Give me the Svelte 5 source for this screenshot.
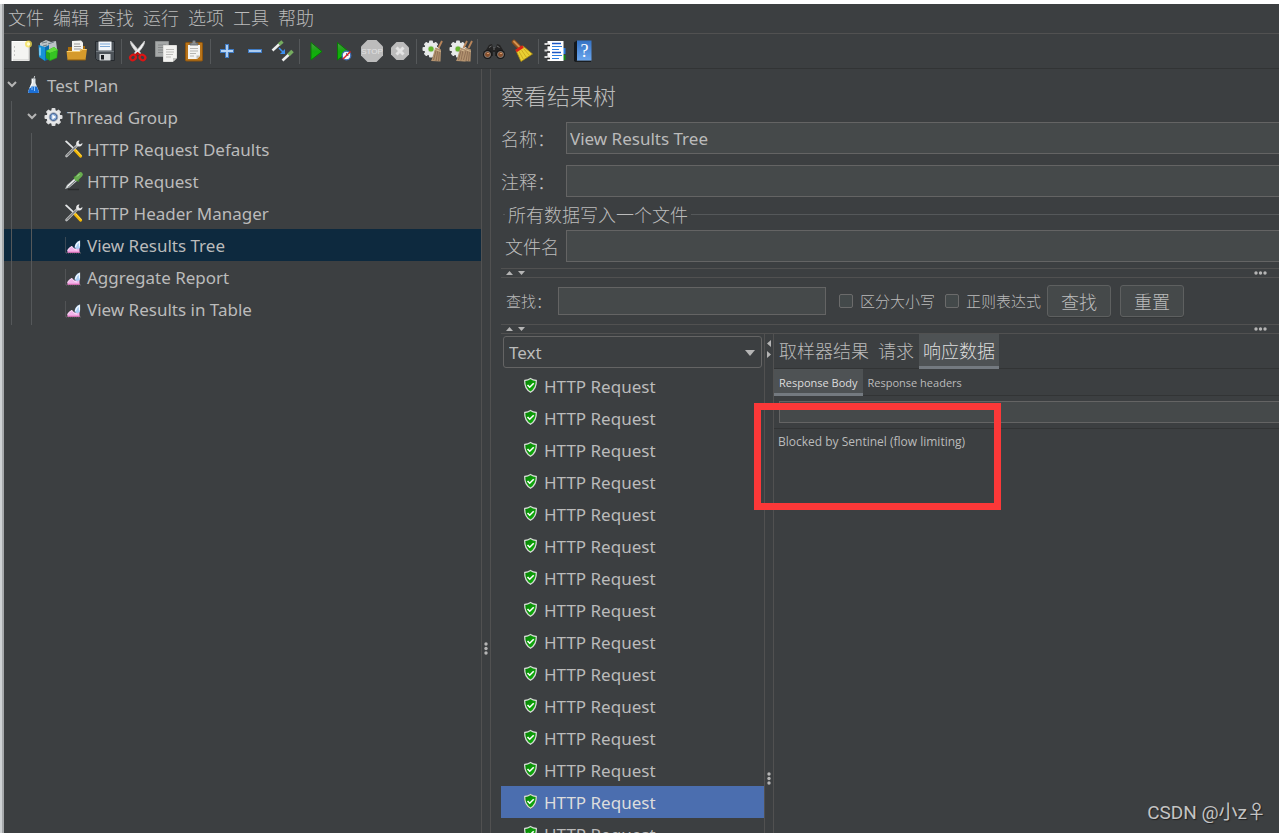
<script>
  const menus = ['文件', '编辑', '查找', '运行', '选项', '工具', '帮助'];

  const toolGroups = [
    [['new', '新建'], ['templates', '模板'], ['open', '打开'], ['save', '保存']],
    [['cut', '剪切'], ['copy', '复制'], ['paste', '粘贴']],
    [['plus', '全部展开'], ['minus', '全部折叠'], ['toggle', '切换']],
    [['start', '启动'], ['startNoPause', '不停顿启动'], ['stop', '停止'], ['shutdown', '关闭']],
    [['clear', '清除'], ['clearAll', '清除全部']],
    [['search', '查找'], ['broom', '重置查找']],
    [['functions', '函数助手'], ['help', '帮助']]
  ];

  const tree = [
    { label: 'Test Plan', level: 0, icon: 'flask', open: true },
    { label: 'Thread Group', level: 1, icon: 'gear', open: true },
    { label: 'HTTP Request Defaults', level: 2, icon: 'tools' },
    { label: 'HTTP Request', level: 2, icon: 'dropper' },
    { label: 'HTTP Header Manager', level: 2, icon: 'tools' },
    { label: 'View Results Tree', level: 2, icon: 'chart' },
    { label: 'Aggregate Report', level: 2, icon: 'chart' },
    { label: 'View Results in Table', level: 2, icon: 'chart' }
  ];
  let selectedNode = $state(5);

  const samples = Array.from({ length: 15 }, () => 'HTTP Request');
  let selectedSample = $state(13);

  const tabs = ['取样器结果', '请求', '响应数据'];
  let tab = $state(2);
  const subTabs = ['Response Body', 'Response headers'];
  let subTab = $state(0);

  const teeth = [0, 45, 90, 135, 180, 225, 270, 315];
</script>

{#snippet cog(cx, cy)}
  <g transform="translate({cx} {cy})">
    {#each teeth as a}
      <rect x="-2" y="-8.500" width="4" height="4" rx="1" fill="#e4e6e6" transform="rotate({a})" />
    {/each}
    <circle r="6.700" fill="#e9ebeb" />
    <circle r="3.200" fill="#c7d6bd" />
    <circle r="2.500" fill="#65b52c" />
  </g>
{/snippet}

{#snippet sweeper(x)}
  <g transform="translate({x} 0)">
    <path d="M20 2 16.500 9" stroke="#b9855a" stroke-width="1.800" />
    <path d="M13.500 8.500 19 10.500 18.500 22.500 9 22C11 19 11.500 13 13.500 8.500z" fill="#b39370" />
    <path d="M14.500 10 11.500 21M16 11 14 22M17.500 11.500 16.500 22" stroke="#80624a" stroke-width=".7" />
    <path d="M13.200 10.500 18.600 12.500" stroke="#d6bb94" stroke-width="1" />
  </g>
{/snippet}

{#snippet glyph(name)}
  <svg class="glyph" viewBox="0 0 24 24" fill="none" aria-hidden="true">
    {#if name === 'new'}
      <rect x="3" y="2.500" width="17" height="19" fill="#f4f4f2" stroke="#fff" />
      <path d="M4 21h16V8" stroke="#c9c9c6" />
      <path d="M5 8h1M5 12h1M5 16h1" stroke="#999" />
      <circle cx="19.500" cy="5" r="3.500" fill="#f5e04a" opacity=".75" />
      <circle cx="19.500" cy="5" r="1.700" fill="#fffbd0" />
    {:else if name === 'templates'}
      <path d="M3 4 9 1l5 2 5-1 1 8-9 5-8-3z" fill="#bcc3c6" />
      <path d="m5 4 5-1M11 5l6-2M6 7l4-1" stroke="#6f7d84" />
      <path d="M1.500 6 8 8v14l-6-4z" fill="#1692d6" />
      <path d="m8 8 4-2v14l-4 2z" fill="#0b6db0" />
      <path d="m9 12 8-4 4 3-1 8-7 3-4-3z" fill="#27a51a" />
      <path d="m9 12 4 2 8-3-4-3z" fill="#5fdc3a" />
      <path d="m13 14 7-2.500-.5 7L13 21z" fill="#35c423" />
      <path d="M3 8.500v8" stroke="#8fd4f7" stroke-width="1.500" />
    {:else if name === 'open'}
      <path d="M3 8h5l1-1h11v13H3z" fill="#a86d0d" />
      <path d="m7 2 9-.5 2 2V15H7z" fill="#f3f3f0" />
      <path d="M9 5h6M9 7.500h7M9 10h7" stroke="#999" />
      <path d="M1.500 12h13l2-2H22l-1.500 11h-18z" fill="#d59a2b" />
      <path d="M2 12.500h13l2-2h4.500" stroke="#f6cf75" />
      <path d="M2.500 21h18" stroke="#8f5c0a" />
    {:else if name === 'save'}
      <path d="M2.500 2.500h19v19h-17l-2-2z" fill="#4c5258" stroke="#262a2e" />
      <rect x="5.500" y="2.500" width="13" height="9" fill="#f2f6fa" />
      <path d="M7 5h10M7 7.500h10" stroke="#7aa7d6" />
      <path d="M3 12.500h18" stroke="#72797f" />
      <rect x="6.500" y="15" width="11" height="6.500" fill="#d6d9db" />
      <rect x="8" y="16" width="3" height="4.500" fill="#1c1f22" />
    {:else if name === 'cut'}
      <path d="M4.500 2c-.5 4 4 9 8.500 14l1.500-2C11 9.500 8 5.500 4.500 2z" fill="#e6e6e6" stroke="#ccc" stroke-width=".8" />
      <path d="M18.500 2c.5 4-4 9-8.500 14l-1.500-2c4-4.500 7-8.500 10-12z" fill="#f4f4f4" stroke="#ccc" stroke-width=".8" />
      <ellipse cx="7" cy="18.500" rx="3" ry="2.500" stroke="#dd1414" stroke-width="2.200" transform="rotate(-35 7 18.500)" />
      <ellipse cx="16.500" cy="18.500" rx="3" ry="2.500" stroke="#dd1414" stroke-width="2.200" transform="rotate(35 16.500 18.500)" />
      <path d="m9.500 16 2-2 2.500 2" stroke="#c40e0e" stroke-width="2" />
    {:else if name === 'copy'}
      <path d="M1.500 2.500h13v15h-13z" fill="#a5a8a8" stroke="#8c8f8f" />
      <path d="M4 6h8M4 8.500h8M4 11h8M4 13.500h5" stroke="#858888" />
      <path d="M9.500 6.500h13V19l-3.500 3.500H9.500z" fill="#f3f3f1" stroke="#dfdfdc" />
      <path d="M12 10.500h8M12 13h8M12 15.500h7M12 18h5" stroke="#bdbdba" />
      <path d="M22.500 19H19v3.500z" fill="#c2c2bf" />
    {:else if name === 'paste'}
      <rect x="3.500" y="3.500" width="17" height="18.500" rx="1" fill="#b8741a" stroke="#8d540d" />
      <path d="M6 6h12v11l-3 3H6z" fill="#f4f4f2" />
      <path d="M8 9.500h8M8 12h8M8 14.500h6M8 17h4" stroke="#b5b5b2" />
      <path d="M18 16.500h-3.500V20z" fill="#bdbdb9" />
      <path d="M8 6V4h2l1-2.500h2L14 4h2v2z" fill="#8b8f92" stroke="#5c6063" stroke-width=".8" />
    {:else if name === 'plus'}
      <path d="M12 5v14M5 12h14" stroke="#3f7bc4" stroke-width="4" />
      <path d="M12 6v12M6 12h12" stroke="#b9d6f5" stroke-width="1.800" />
    {:else if name === 'minus'}
      <path d="M5 12h14" stroke="#3f7bc4" stroke-width="4" />
      <path d="M6 12h12" stroke="#b9d6f5" stroke-width="1.800" />
    {:else if name === 'toggle'}
      <path d="M1.500 11.500 8.500 5" stroke="#eceeee" stroke-width="2.500" />
      <path d="m8 5.500 3.500-3" stroke="#75ac5f" stroke-width="3.500" />
      <path d="M11.500 21.500 18 15.500" stroke="#eceeee" stroke-width="2.500" />
      <path d="m17.500 16 4-4" stroke="#75ac5f" stroke-width="3.500" />
      <path d="m8 9 4.500 4.500" stroke="#3b8ef0" stroke-width="1.500" />
      <path d="M14 10v5H9z" fill="#3b8ef0" />
    {:else if name === 'start'}
      <path d="M7 3.500 18 12.500 7 21z" fill="url(#play)" stroke="#087a05" />
    {:else if name === 'startNoPause'}
      <path d="M5.500 3.500 16.500 12.500 5.500 21z" fill="url(#play)" stroke="#087a05" />
      <circle cx="14.500" cy="16.500" r="4.300" fill="#f4f6fa" stroke="#3e6fb5" stroke-width="1.300" />
      <path d="M14.500 14v2.500h2" stroke="#5b7ba8" />
      <path d="m11 20 7.500-7.500" stroke="#e02020" stroke-width="1.400" />
    {:else if name === 'stop'}
      <path d="M7.500 1h9L23 7.500v9L16.500 23h-9L1 16.500v-9z" fill="#bcbcbc" />
      <text x="12" y="15" text-anchor="middle" class="stop-word">STOP</text>
    {:else if name === 'shutdown'}
      <path d="M8.500 3h7L21 8.500v7L15.500 21h-7L3 15.500v-7z" fill="#bcbcbc" />
      <path d="m8.500 8.500 7 7M15.500 8.500l-7 7" stroke="#e3e3e3" stroke-width="3" />
    {:else if name === 'clear'}
      {@render cog(10, 10)}
      {@render sweeper(1)}
    {:else if name === 'clearAll'}
      {@render cog(9, 10)}
      {@render sweeper(-2)}
      {@render sweeper(3)}
    {:else if name === 'search'}
      <path d="M4 11 7 6l3-1 1 4h3l1-4 3 1 3 5 1 6H13v-4h-2v4H2z" fill="#232323" />
      <circle cx="5.500" cy="15.500" r="4.500" fill="#171717" />
      <circle cx="18.500" cy="15.500" r="4.500" fill="#171717" />
      <circle cx="5.500" cy="15.500" r="3" fill="#87502d" stroke="#888" stroke-width=".8" />
      <circle cx="18.500" cy="15.500" r="3" fill="#87502d" stroke="#888" stroke-width=".8" />
      <path d="M5 14.500h2M18 14.500h2" stroke="#d69a6d" />
      <path d="M7 8.500 9.500 7M15 7l2.500 1.500M12 8v3" stroke="#777" stroke-width=".9" />
    {:else if name === 'broom'}
      <path d="m4 3 6 6" stroke="#8c4f1c" stroke-width="4.500" stroke-linecap="round" />
      <path d="m4 2.500 5 5" stroke="#d39250" stroke-width="1.800" stroke-linecap="round" />
      <path d="M6 11.500 13 7l9.500 8L11 22.500z" fill="#ead033" stroke="#ac8b10" stroke-width=".8" />
      <path d="m9 12.500 4.500 8M11.500 11l5 7.500M13.500 9.500l6 7" stroke="#c9a81d" stroke-width=".9" />
      <path d="m6 12 7-4.500" stroke="#d92418" stroke-width="2.800" />
    {:else if name === 'functions'}
      <path d="M19 9h3.500v6H19z" fill="#2c7de0" />
      <path d="M19 16h3.500v5H19z" fill="#128a17" />
      <rect x="4.500" y="2" width="16" height="20" fill="#fff" />
      <path d="M9 4.500h9M9 13.500h9" stroke="#1d57c4" stroke-width="1.400" />
      <path d="M9 7.500h10M9 10.500h7M9 16.500h10M9 19.500h7" stroke="#2c7de0" stroke-width="1" />
      <path d="M1.500 5h4M1.500 11.500h4M1.500 18h4" stroke="#d7d7d7" stroke-width="2" />
      <path d="M4 6.500h3M4 13h3M4 19.500h3" stroke="#222" stroke-width="1.500" />
    {:else if name === 'help'}
      <path d="M3 3.500 6 1.500v20L3 22.500z" fill="#14181c" />
      <path d="M6 1.500h14.500v20H6z" fill="url(#book)" />
      <path d="M4 22.500h16" stroke="#1a1d20" />
      <text x="13.500" y="18" text-anchor="middle" class="help-mark">?</text>
    {/if}
  </svg>
{/snippet}

{#snippet nodeIcon(name)}
  <svg class="node-icon" viewBox="0 0 20 20" fill="none" aria-hidden="true">
    {#if name === 'flask'}
      <path d="M7.500 3.500h4v4.500l3.500 8.500q.3 1.500-1 1.500H5q-1.300 0-1-1.500L7.500 8z" fill="#dfe6ea" />
      <path d="M6.300 11.500h6.500l2 5q.3 1.500-1 1.500H5.200q-1.300 0-1-1.500z" fill="#1b6fd6" />
      <path d="M8 15v-3M10.500 16v-5" stroke="#8cc4fa" />
      <path d="m9.500 5 1.200-4" stroke="#c4c8ca" />
      <path d="M8.500 4v4L6 13" stroke="#fff" />
    {:else if name === 'gear'}
      <g transform="translate(9.500 10)">
        {#each teeth as a}
          <rect x="-2" y="-9" width="4" height="4" rx="1" fill="#dedfe0" transform="rotate({a})" />
        {/each}
        <circle r="7" fill="#e8e9ea" />
        <circle r="4.300" fill="#3f5f90" stroke="#a3abb6" stroke-width=".8" />
        <circle r="3" fill="#86a9d6" />
        <path d="M-1.200-2.500 2.500 0-1.200 2.500z" fill="#fff" />
      </g>
    {:else if name === 'tools'}
      <path d="m1 2 1.500-.5 7.500 7-1.200 1.200L1.500 3z" fill="#e4e6e7" />
      <path d="m11 11 5.500 6" stroke="#f2b705" stroke-width="3.200" stroke-linecap="round" />
      <path d="m11.500 10.500 6 6.500" stroke="#ffe06a" stroke-width=".8" />
      <path d="M2.500 17 13.500 6" stroke="#b9bbbc" stroke-width="2.600" stroke-linecap="round" />
      <path d="m3 16.500 9-9" stroke="#4b4d4e" stroke-width=".9" />
      <path d="M15.500 1.500c-2.500 0-4 2-3 4.500l2 1.500c2 .5 4-1 4-3.500l-2.500 1.500-1.500-1.500z" fill="#e9eaeb" />
    {:else if name === 'dropper'}
      <path d="M4 18.500h11" stroke="#2a2c2d" stroke-width="1.500" />
      <path d="m1 18 2-4 8-7 2.500 2.500-8 7z" fill="#c5cacb" />
      <path d="m3.500 15.500 7.500-7" stroke="#fff" />
      <path d="m4 16.500 8-7.500" stroke="#555b5d" stroke-width=".8" />
      <path d="m10 5.500 5 5" stroke="#3f7d2c" stroke-width="2" />
      <path d="m12.500 7.500 4-4" stroke="#68ad4f" stroke-width="4.600" stroke-linecap="round" />
      <path d="m13 5.500 2.500-2.500" stroke="#b0dea0" />
    {:else}
      <path d="M1.500 2.500v15.500H17" stroke="#66696b" stroke-dasharray="1 1" />
      <path d="M3.500 17.500v-2.500q2-3 4.500-4 1.500 3 3.500 2.500l4-2v6z" fill="#f3b4ea" />
      <path d="M10.500 12.500Q11 7 16 5.500V13l-3 1.500z" fill="#a9cdf3" />
      <path d="M11.500 12Q12 8.500 15.500 6.500v5" stroke="#eef7ff" stroke-width="1.200" />
      <path d="M3.500 15.500q2-3.500 4.500-4l2.500 3 2.500.5" stroke="#fbdff7" />
      <path d="M3.500 17.200h12.500" stroke="#e46cbc" />
    {/if}
  </svg>
{/snippet}

{#snippet bar()}
  <div class="hsplit" role="separator">
    <svg width="20" height="6" aria-hidden="true"><path d="M0 5 3.500 1 7 5zM12 1h7l-3.500 4z" fill="#b5b5b5" /></svg>
    <svg width="13" height="4" aria-hidden="true"><g fill="#b5b5b5"><circle cx="2" cy="2" r="1.700" /><circle cx="6.500" cy="2" r="1.700" /><circle cx="11" cy="2" r="1.700" /></g></svg>
  </div>
{/snippet}

{#snippet dots()}
  <svg width="4" height="13" aria-hidden="true"><g fill="#b5b5b5"><circle cx="2" cy="2" r="1.700" /><circle cx="2" cy="6.500" r="1.700" /><circle cx="2" cy="11" r="1.700" /></g></svg>
{/snippet}

<svg class="defs" aria-hidden="true">
  <defs>
    <linearGradient id="play" x1="0" y1="0" x2="0" y2="1"><stop offset="0" stop-color="#4f9a4a" /><stop offset=".5" stop-color="#14a80e" /><stop offset="1" stop-color="#0bbb07" /></linearGradient>
    <linearGradient id="book" x1="0" y1="0" x2="0" y2="1"><stop offset="0" stop-color="#3572c4" /><stop offset="1" stop-color="#6aa6ee" /></linearGradient>
    <linearGradient id="shield" x1="0" y1="0" x2="1" y2="1"><stop offset="0" stop-color="#067d04" /><stop offset="1" stop-color="#12b80d" /></linearGradient>
  </defs>
</svg>

<div class="window">
  <nav class="menubar">
    {#each menus as m}<button>{m}</button>{/each}
  </nav>

  <div class="toolbar" role="toolbar">
    {#each toolGroups as group, g}
      {#if g > 0}<span class="sep"></span>{/if}
      {#each group as [name, label]}
        <button aria-label={label}>{@render glyph(name)}</button>
      {/each}
    {/each}
  </div>

  <div class="workspace">
    <ul class="tree">
      {#each tree as node, i}
        <li>
          <button class="node" class:selected={i === selectedNode} onclick={() => (selectedNode = i)}>
            {#each { length: node.level } as _}<span class="guide"></span>{/each}
            <span class="twist">
              {#if node.open}
                <svg width="16" height="16" viewBox="0 0 16 16" aria-hidden="true"><path d="m4 5 4 4 4-4" fill="none" stroke="#b5b5b5" stroke-width="2" /></svg>
              {/if}
            </span>
            {@render nodeIcon(node.icon)}
            <span class="text">{node.label}</span>
          </button>
        </li>
      {/each}
    </ul>

    <div class="vsplit main-split" role="separator">{@render dots()}</div>

    <main>
      <h1>察看结果树</h1>
      <div class="fields">
        <label for="name">名称：</label>
        <input id="name" type="text" value="View Results Tree" />
        <label for="comment">注释：</label>
        <input id="comment" type="text" />
      </div>
      <fieldset>
        <legend>所有数据写入一个文件</legend>
        <div class="file-row">
          <label for="file">文件名</label>
          <input id="file" type="text" />
        </div>
      </fieldset>

      {@render bar()}

      <div class="search-row">
        <label for="find" class="find-label">查找：</label>
        <input id="find" type="text" />
        <label class="check"><input type="checkbox" />区分大小写</label>
        <label class="check"><input type="checkbox" />正则表达式</label>
        <button>查找</button>
        <button>重置</button>
      </div>

      {@render bar()}

      <div class="results">
        <section class="samples">
          <div class="combo">
            <select aria-label="渲染器"><option>Text</option></select>
            <svg width="10" height="6" aria-hidden="true"><path d="M0 0h10L5 6z" fill="#b5b5b5" /></svg>
          </div>
          <ul>
            {#each samples as s, i}
              <li>
                <button class:selected={i === selectedSample} onclick={() => (selectedSample = i)}>
                  <svg width="15" height="18" viewBox="0 0 15 18" aria-hidden="true">
                    <path d="M7.500 1Q10 2.800 14 3.200q.4 9-6.500 13Q.6 12.200 1 3.200 5 2.800 7.500 1z" fill="#2b2d2e" />
                    <path d="M7.500 1.500Q10 3.300 13.300 3.500q.4 8-5.800 11.700Q1.300 11.500 1.700 3.500 5 3.300 7.500 1.500z" fill="url(#shield)" stroke="#d5dad5" stroke-width="1.300" />
                    <path d="m4.500 8 2.200 2.200 4-4" fill="none" stroke="#fff" stroke-width="1.600" />
                  </svg>
                  <span class="text">{s}</span>
                </button>
              </li>
            {/each}
          </ul>
        </section>

        <div class="vsplit result-split" role="separator">
          <svg class="arrows" width="6" height="20" aria-hidden="true"><path d="M5 1v7L1 4.500zM1 12v7l4-3.500z" fill="#b5b5b5" /></svg>
          {@render dots()}
        </div>

        <section class="detail">
          <div class="tabs" role="tablist">
            {#each tabs as t, i}
              <button role="tab" aria-selected={i === tab} onclick={() => (tab = i)}>{t}</button>
            {/each}
          </div>
          <div class="tabs sub" role="tablist">
            {#each subTabs as t, i}
              <button role="tab" aria-selected={i === subTab} onclick={() => (subTab = i)}>{t}</button>
            {/each}
          </div>
          <div class="body-search"><input type="text" aria-label="查找" /></div>
          <p>Blocked by Sentinel (flow limiting)</p>
          <div class="highlight"></div>
        </section>
      </div>
    </main>
  </div>
  <div class="watermark">CSDN @小z♀</div>
</div>

<style>
  :global(body) { margin: 0; background: #3c3f41; }
  * { box-sizing: border-box; }
  button, input, select { font: inherit; color: inherit; margin: 0; }
  button { background: none; border: 0; padding: 0; white-space: nowrap; }
  ul { list-style: none; margin: 0; padding: 0; }
  .defs { position: absolute; width: 0; height: 0; }

  .window {
    position: relative;
    display: flex;
    flex-direction: column;
    height: 100vh;
    overflow: hidden;
    border-top: 4px solid #fff;
    padding-left: 4px;
    color: #bbb;
    background: linear-gradient(90deg, #cfd2d4 2px, #a6a9ab 2px, #a6a9ab 4px, #3c3f41 4px);
    font: 17px/24px "Noto Sans", "Noto Sans CJK SC", sans-serif;
  }
  .menubar {
    flex: none;
    display: flex;
    align-items: flex-start;
    gap: 9px;
    height: 30px;
    padding-left: 4px;
    border-bottom: 1px solid #515151;
    font: 18px/26px "Noto Sans CJK SC", sans-serif;
    font-weight: 300;
  }
  .toolbar {
    flex: none;
    display: flex;
    align-items: center;
    height: 35px;
    padding-left: 3px;
    border-bottom: 1px solid #323435;
  }
  .toolbar button { width: 28px; height: 28px; display: grid; place-items: center; }
  .glyph { width: 24px; height: 24px; }
  .stop-word { font: 8px "Liberation Sans", sans-serif; fill: #e2e2e2; }
  .help-mark { font: 18px "Liberation Serif", serif; fill: #fff; }
  .sep { width: 1px; height: 25px; margin: 0 2px; background: #55585a; }

  .workspace { flex: 1; min-height: 0; display: flex; }
  .tree { flex: 0 0 477px; }
  .node { display: flex; align-items: center; width: 100%; height: 32px; text-align: left; }
  .node.selected { background: #0d293e; }
  .text { padding-top: 2px; }
  .guide { width: 20px; height: 100%; background: linear-gradient(#55585a, #55585a) 7px 0 / 1px 100% no-repeat; }
  .twist { display: flex; width: 20px; height: 16px; }
  .node-icon { width: 20px; height: 20px; margin-right: 3px; }

  .vsplit {
    flex: none;
    position: relative;
    display: flex;
    justify-content: center;
    width: 10px;
    border: solid #515151;
    border-width: 0 1px;
  }
  .main-split { padding-top: 573px; align-items: flex-start; }
  .result-split { flex-direction: column; align-items: center; justify-content: flex-start; gap: 413px; padding-top: 5px; }

  main { flex: 1; min-width: 0; display: flex; flex-direction: column; padding-left: 10px; }
  h1 { flex: none; margin: 0; padding-top: 10px; height: 53px; font: 23px/32px "Noto Sans CJK SC", sans-serif; font-weight: 300; }
  label, legend { font-family: "Noto Sans CJK SC", sans-serif; font-weight: 300; }
  input[type="text"] {
    width: 100%;
    height: 32px;
    padding: 0 3px;
    background: #45494a;
    border: 1px solid #646464;
    border-right-width: 0;
    outline: 0;
  }
  .fields {
    flex: none;
    display: grid;
    grid-template-columns: 65px 1fr;
    align-items: center;
    row-gap: 11px;
  }
  .fields label, .file-row label, legend { font-size: 18px; }
  fieldset {
    flex: none;
    min-width: 0;
    height: 66px;
    margin: 5px 0 0 2px;
    padding: 0;
    border: solid #55585a;
    border-width: 1px 0 0;
  }
  legend { margin-left: 2px; padding: 0 3px; line-height: 24px; }
  .file-row { display: grid; grid-template-columns: 63px 1fr; align-items: center; padding-top: 4px; }
  .file-row label { padding-left: 2px; }

  .hsplit {
    flex: none;
    display: flex;
    align-items: center;
    justify-content: space-between;
    height: 10px;
    padding: 0 12px 0 5px;
    border: solid #515151;
    border-width: 1px 0;
  }
  .search-row { flex: none; display: flex; align-items: center; height: 46px; padding-left: 5px; font-size: 15px; }
  .find-label { width: 52px; }
  .search-row input[type="text"] { width: 268px; height: 28px; border-right-width: 1px; margin-right: 13px; }
  .check { display: flex; align-items: center; gap: 7px; margin-right: 10px; line-height: 22px; white-space: nowrap; }
  .check input { appearance: none; width: 14px; height: 14px; border: 1px solid #6b6b6b; border-radius: 2px; background: #43494a; }
  .search-row button {
    width: 64px;
    height: 32px;
    margin-right: 9px;
    border: 1px solid #5e6060;
    border-radius: 3px;
    background: #45494a;
    box-shadow: 0 1px 0 #36393a;
    font: 18px/28px "Noto Sans CJK SC", sans-serif;
    font-weight: 300;
  }
  .check + button { margin-left: -4px; }

  .results { flex: 1; min-height: 0; display: flex; }
  .samples { flex: 0 0 263px; overflow: hidden; }
  .combo { position: relative; margin: 2px 2px; }
  .combo select {
    display: block;
    appearance: none;
    width: 100%;
    height: 32px;
    padding: 2px 5px 0;
    background: #3c3f41;
    border: 1px solid #646464;
    border-radius: 3px;
  }
  .combo svg { position: absolute; right: 7px; top: 14px; pointer-events: none; }
  .samples li button { display: flex; align-items: center; gap: 6px; width: 100%; height: 32px; padding-left: 22px; text-align: left; }
  .samples li .selected { background: #4b6eaf; color: #ddd; }

  .detail { position: relative; flex: 1; min-width: 0; }
  .tabs {
    display: flex;
    gap: 1px;
    height: 35px;
    padding-left: 1px;
    border-bottom: 1px solid #323435;
    font: 18px/32px "Noto Sans CJK SC", sans-serif;
    font-weight: 300;
  }
  .tabs button { height: 35px; padding: 0 4px; border-bottom: 3px solid transparent; }
  .tabs button[aria-selected="true"] { background: #4e5254; border-bottom-color: #747a80; color: #ddd; }
  .tabs.sub { height: 27px; padding-left: 0; gap: 0; font: 11px/20px "Open Sans", sans-serif; }
  .tabs.sub button { height: 27px; padding: 4px 5px 0; }
  .body-search { height: 33px; padding: 5px 0 0 5px; border-bottom: 1px solid #323435; }
  .body-search input[type="text"] { display: block; height: 22px; }
  p { margin: 4px 0 0 4px; font: 12px/18px "Open Sans", sans-serif; }
  .highlight { position: absolute; left: -20px; top: 69px; width: 247px; height: 107px; border: 7px solid #fc3838; }

  .watermark {
    position: absolute;
    right: 13px;
    bottom: 8px;
    color: #c4c4c4;
    font: 19px/24px Roboto, "Noto Sans CJK SC", sans-serif;
    text-shadow: 1px 1px 1px #222;
  }
</style>
